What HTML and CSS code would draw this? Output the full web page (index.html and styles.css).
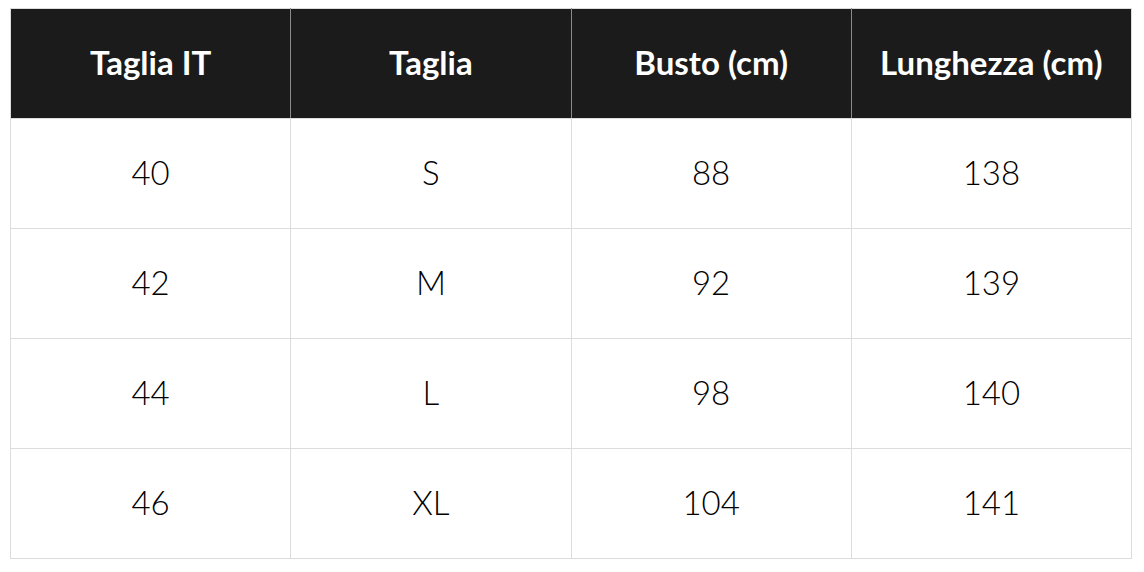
FILE: index.html
```html
<!DOCTYPE html>
<html lang="it">
<head>
<meta charset="utf-8">
<title>Tabella taglie</title>
<link rel="stylesheet" href="styles.css">
</head>
<body>
<table class="size-table">
  <thead>
    <tr>
      <th>Taglia IT</th>
      <th>Taglia</th>
      <th>Busto (cm)</th>
      <th>Lunghezza (cm)</th>
    </tr>
  </thead>
  <tbody>
    <tr><td>40</td><td>S</td><td>88</td><td>138</td></tr>
    <tr><td>42</td><td>M</td><td>92</td><td>139</td></tr>
    <tr><td>44</td><td>L</td><td>98</td><td>140</td></tr>
    <tr><td>46</td><td>XL</td><td>104</td><td>141</td></tr>
  </tbody>
</table>
</body>
</html>
```
FILE: styles.css
```css
html, body {
  background: #ffffff;
}
body {
  margin: 8px 0 0 10px;
  font-family: "Lato", "Noto Sans", sans-serif;
}
.size-table {
  border-collapse: collapse;
  table-layout: fixed;
  width: 1122px;
}
.size-table th,
.size-table td {
  border: 1px solid #dcdcdc;
  text-align: center;
  vertical-align: middle;
  padding: 0;
}
.size-table th {
  background: #1b1b1b;
  color: #ffffff;
  font-weight: 700;
  font-size: 33px;
  height: 105px;
  padding-bottom: 4px;
  border-color: #8a8a8a;
  border-top-color: #dcdcdc;
  border-bottom-color: #dcdcdc;
}
.size-table th:first-child { border-left-color: #dcdcdc; }
.size-table th:last-child { border-right-color: #dcdcdc; }
.size-table td {
  color: #000000;
  font-weight: 300;
  font-size: 33px;
  height: 106px;
  padding-bottom: 3px;
}
```
